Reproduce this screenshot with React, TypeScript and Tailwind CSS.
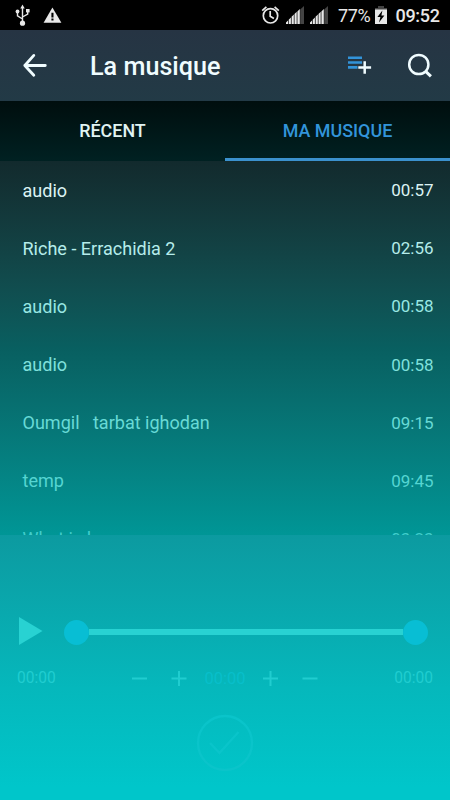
import React from "react";

const tracks = [
  { name: "audio", time: "00:57", color: "text-[#dcf3f3]" },
  { name: "Riche - Errachidia 2", time: "02:56", color: "text-[#b5ecea]" },
  { name: "audio", time: "00:58", color: "text-[#98e7e3]" },
  { name: "audio", time: "00:58", color: "text-[#7fe0dc]" },
  { name: "Oumgil   tarbat ighodan", time: "09:15", color: "text-[#68dad6]" },
  { name: "temp", time: "09:45", color: "text-[#55d5d2]" },
  { name: "What is love", time: "03:23", color: "text-[#40cdcc]" },
];

function Signal() {
  return (
    <svg width="18" height="18" viewBox="0 0 18 18">
      <path d="M14.2 18V3.6L18 0v18z" fill="#444" />
      <path d="M0 18v-1.6l2-1.8V18zM2.7 18v-4.2l2.2-2.2V18zM5.6 18v-7.2l2.2-2.2V18zM8.5 18V8l2.2-2.2V18zM11.4 18V5.4l2.4-2.4v15z" fill="#e8e8e8" />
    </svg>
  );
}

function StatusBar() {
  return (
    <div className="relative h-[30px] w-full bg-black text-[#e8e8e8]">
      <svg className="block" width="450" height="30" viewBox="0 0 450 30">
        <g fill="none" stroke="#e8e8e8" strokeWidth="1.4">
          <path d="M22.5 8v14M22.5 19l-5-3.2v-4M22.5 17l5.2-3v-4" />
        </g>
        <g fill="#e8e8e8">
          <path d="M22.5 4.5l2.2 4h-4.4z" />
          <circle cx="22.5" cy="23.2" r="2.6" />
          <circle cx="17.5" cy="11.5" r="1.9" />
          <path d="M26 9h3.6v3.4H26z" />
          <path d="M52.4 7.4l9 15.4H43.6z" />
        </g>
        <path d="M51.4 12.8h2.1v4.6h-2.1zM51.4 18.6h2.1v2h-2.1z" fill="#000" />
        <g fill="none" stroke="#e8e8e8" strokeWidth="1.7">
          <circle cx="270.5" cy="15.8" r="7.2" />
          <path d="M270.2 11v5.2l3.7 2.2M262.2 10.6l4.2-3.7M278.8 10.6l-4.2-3.7" />
        </g>
        <g transform="translate(286 6)"><Signal /></g>
        <g transform="translate(310 6)"><Signal /></g>
        <path d="M378 6h6v2h3v5h-12V8h3z" fill="#444" />
        <path d="M375 9.5h12V24h-12z" fill="#e8e8e8" />
        <path d="M382.4 10.5l-5 6.5h3l-1.4 5.4 5.4-7h-3z" fill="#000" />
      </svg>
      <span className="absolute top-[4px] left-[338px] text-[18px] leading-[24px] tracking-[-0.4px]">77%</span>
      <span className="absolute top-[4px] left-[395.5px] text-[18px] leading-[24px] font-medium tracking-[-0.3px]">09:52</span>
    </div>
  );
}

function Header() {
  return (
    <header className="flex h-[71px] items-center bg-linear-to-b from-[#263443] to-[#223a46] pl-[22px] pr-[17px]">
      <svg width="26" height="26" viewBox="0 0 26 26" fill="none" stroke="#f0fcff" strokeWidth="2.8" strokeLinecap="round" strokeLinejoin="round">
        <path d="M23.3 12.5H2.8M11.8 2.4L2.8 12.5l9 9.8" />
      </svg>
      <h1 className="ml-[42px] pt-[2px] text-[25.2px] leading-[30px] font-medium text-[#f0fcff]">La musique</h1>
      <svg className="ml-auto" width="25" height="26" viewBox="0 0 25 26" fill="none">
        <path d="M1 4.8h14M1 9.5h14M1 14.4h9.5" stroke="#3294da" strokeWidth="2.6" />
        <path d="M17.7 8.3v12.4M11.3 14.5h12.8" stroke="#f0fcff" strokeWidth="2.5" />
      </svg>
      <svg className="ml-[35px]" width="26" height="26" viewBox="0 0 26 26" fill="none" stroke="#f0fcff" strokeWidth="2.5">
        <circle cx="11.8" cy="11.5" r="9.6" />
        <path d="M18.4 18.1l5.5 5.2" strokeWidth="3" />
      </svg>
    </header>
  );
}

function Tabs() {
  return (
    <nav className="grid h-[60px] grid-cols-2 bg-linear-to-b from-[#000e0e] to-[#002122] text-center text-[17.9px] leading-[60px] font-medium">
      <div className="text-[#e0f4f3]">RÉCENT</div>
      <div className="h-[60px] border-b-3 border-[#3b91cd] text-[#3294da]">MA MUSIQUE</div>
    </nav>
  );
}

function Player() {
  return (
    <section className="flex h-[265px] flex-col bg-linear-to-b from-[#0c9aa0] from-0% via-[#05b8bc] via-58% to-[#00c6ca] to-95% pt-[79px]">
      <div className="flex h-[36px] items-center pl-[19px] pr-[22px]">
        <svg className="-mt-[3px]" width="24" height="28" viewBox="0 0 24 28">
          <path d="M0 0l23.5 14L0 28z" fill="#28d2d2" />
        </svg>
        <div className="ml-[21px] flex flex-1 items-center">
          <div className="size-[25px] rounded-full bg-[#08bed4]" />
          <div className="h-[6px] flex-1 bg-[#28d2d2]" />
          <div className="size-[25px] rounded-full bg-[#08bed4]" />
        </div>
      </div>
      <div className="mt-[16px] flex h-[26px] items-center justify-between px-[17px] text-[15.6px] text-[#20cdd0]">
        <span>00:00</span>
        <div className="flex items-center">
          <svg width="56" height="16" viewBox="0 0 56 16" stroke="#20cdd0" strokeWidth="2">
            <path d="M1 7.5h15M40.5 7.5h15M48 0v15" />
          </svg>
          <span className="mx-[17px] text-[16.5px] text-[#08bfca]">00:00</span>
          <svg width="56" height="16" viewBox="0 0 56 16" stroke="#20cdd0" strokeWidth="2">
            <path d="M0 7.5h15M39.5 7.5h15M7.5 0v15" />
          </svg>
        </div>
        <span>00:00</span>
      </div>
      <svg className="mx-auto mt-[22px]" width="58" height="58" viewBox="0 0 58 58" fill="none" stroke="#0ac4ca" strokeWidth="2.4">
        <circle cx="29" cy="29" r="27" />
        <path d="M14 29l9.5 10 19-21" />
      </svg>
    </section>
  );
}

export default function App() {
  return (
    <main className="flex h-[800px] w-[450px] flex-col overflow-hidden font-['Roboto',sans-serif]">
      <StatusBar />
      <Header />
      <Tabs />
      <ul className="h-[374px] overflow-hidden bg-linear-to-b from-[#122a2d] from-0% via-[#085f60] via-50% to-[#009696] to-100% pt-[1px]">
        {tracks.map((t, i) => (
          <li key={i} className={`flex h-[58.1px] items-center justify-between pl-[22.5px] pr-[16.5px] ${t.color}`}>
            <span className="whitespace-pre pb-[2px] text-[18.05px]">{t.name}</span>
            <span className="text-[17px]">{t.time}</span>
          </li>
        ))}
      </ul>
      <Player />
    </main>
  );
}
